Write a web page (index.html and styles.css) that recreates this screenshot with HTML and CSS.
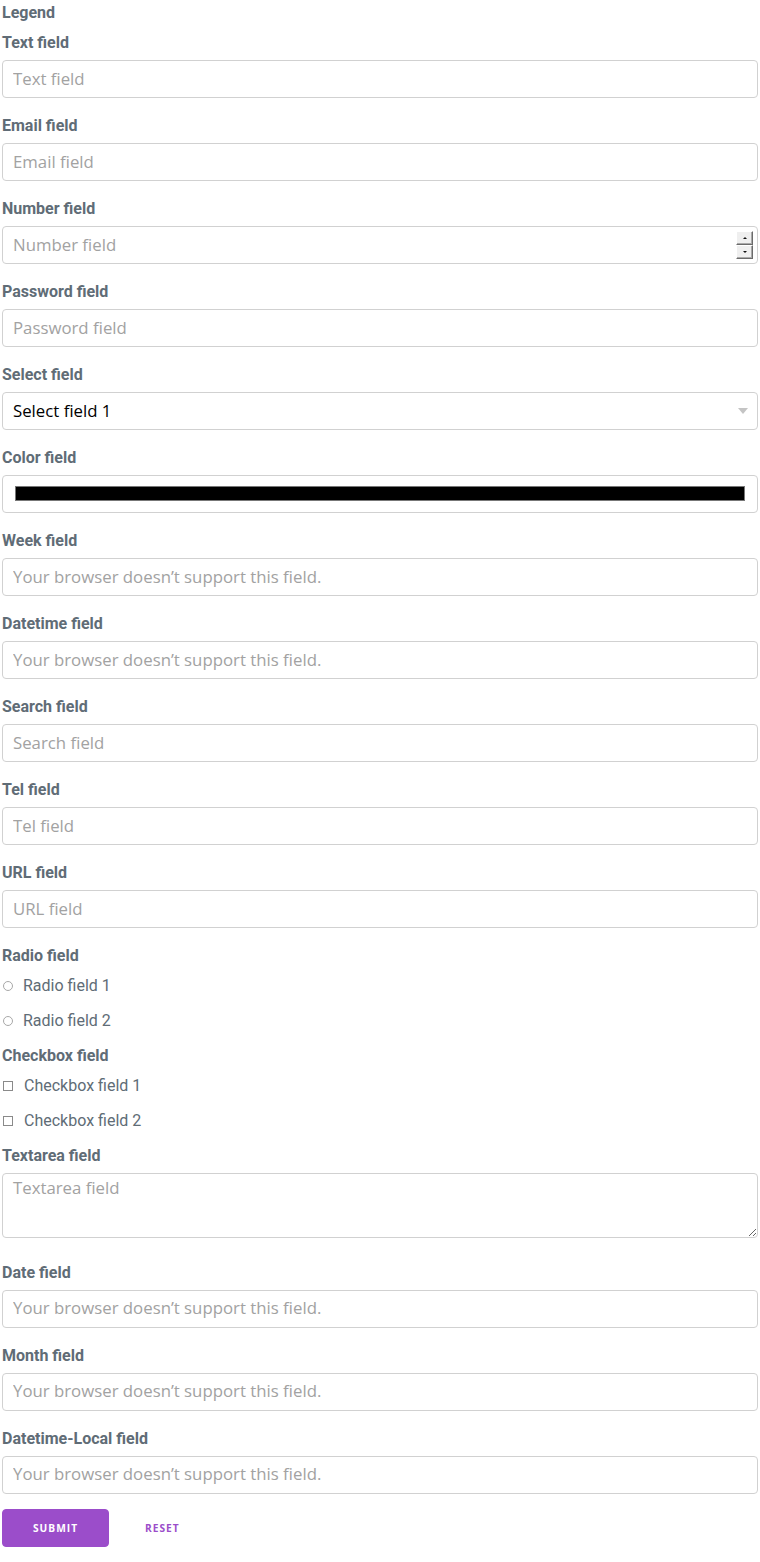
FILE: index.html
```html
<!DOCTYPE html>
<html lang="en">
<head>
<meta charset="utf-8">
<title>Form</title>
<link rel="stylesheet" href="styles.css">
</head>
<body>
<form class="form">
  <fieldset class="fieldset">
    <legend class="legend">Legend</legend>

    <label class="label" for="f-text">Text field</label>
    <input class="field" id="f-text" type="text" placeholder="Text field">

    <label class="label" for="f-email">Email field</label>
    <input class="field" id="f-email" type="email" placeholder="Email field">

    <label class="label" for="f-number">Number field</label>
    <div class="number-wrap">
      <input class="field field-number" id="f-number" type="number" placeholder="Number field">
      <span class="spinner" aria-hidden="true">
        <span class="spin spin-up"><span class="tri tri-up"></span></span>
        <span class="spin spin-down"><span class="tri tri-down"></span></span>
      </span>
    </div>

    <label class="label" for="f-password">Password field</label>
    <input class="field" id="f-password" type="password" placeholder="Password field">

    <label class="label" for="f-select">Select field</label>
    <div class="select-wrap">
      <select class="field field-select" id="f-select">
        <option>Select field 1</option>
        <option>Select field 2</option>
      </select>
    </div>

    <label class="label" for="f-color">Color field</label>
    <input class="field field-color" id="f-color" type="color" value="#000000">

    <label class="label" for="f-week">Week field</label>
    <input class="field" id="f-week" type="text" placeholder="Your browser doesn’t support this field.">

    <label class="label" for="f-datetime">Datetime field</label>
    <input class="field" id="f-datetime" type="text" placeholder="Your browser doesn’t support this field.">

    <label class="label" for="f-search">Search field</label>
    <input class="field" id="f-search" type="text" placeholder="Search field">

    <label class="label" for="f-tel">Tel field</label>
    <input class="field" id="f-tel" type="tel" placeholder="Tel field">

    <label class="label" for="f-url">URL field</label>
    <input class="field" id="f-url" type="url" placeholder="URL field">

    <span class="label">Radio field</span>
    <div class="choice">
      <input class="radio" id="r1" type="radio" name="radio">
      <label class="choice-label" for="r1">Radio field 1</label>
    </div>
    <div class="choice">
      <input class="radio" id="r2" type="radio" name="radio">
      <label class="choice-label" for="r2">Radio field 2</label>
    </div>

    <span class="label">Checkbox field</span>
    <div class="choice">
      <input class="checkbox" id="c1" type="checkbox">
      <label class="choice-label" for="c1">Checkbox field 1</label>
    </div>
    <div class="choice">
      <input class="checkbox" id="c2" type="checkbox">
      <label class="choice-label" for="c2">Checkbox field 2</label>
    </div>

    <label class="label" for="f-textarea">Textarea field</label>
    <textarea class="field field-textarea" id="f-textarea" placeholder="Textarea field"></textarea>

    <label class="label" for="f-date">Date field</label>
    <input class="field" id="f-date" type="text" placeholder="Your browser doesn’t support this field.">

    <label class="label" for="f-month">Month field</label>
    <input class="field" id="f-month" type="text" placeholder="Your browser doesn’t support this field.">

    <label class="label" for="f-dtl">Datetime-Local field</label>
    <input class="field" id="f-dtl" type="text" placeholder="Your browser doesn’t support this field.">
  </fieldset>

  <div class="actions">
    <button class="btn btn-primary" type="submit">Submit</button>
    <button class="btn btn-clear" type="reset">Reset</button>
  </div>
</form>
</body>
</html>
```
FILE: styles.css
```css
* { box-sizing: border-box; }

html, body {
  margin: 0;
  padding: 0;
  background: #fff;
}

body {
  font-family: Roboto, "Liberation Sans", sans-serif;
  font-size: 16px;
  line-height: 25px;
  color: #606c76;
}

.form {
  padding: 0 2px;
  width: 760px;
}

.fieldset {
  border: 0;
  margin: 0;
  padding: 0;
  min-width: 0;
}

.legend {
  display: block;
  padding: 0;
  margin: 0 0 5px;
  font-weight: 700;
  font-size: 16px;
  line-height: 25px;
}

.label {
  display: block;
  font-weight: 700;
  font-size: 16px;
  line-height: 25px;
  margin-bottom: 5px;
}

.field {
  display: block;
  width: 100%;
  height: 38px;
  margin: 0 0 15px;
  padding: 5px 10px 7px;
  border: 1px solid #d1d1d1;
  border-radius: 4px;
  background: #fff;
  font-family: "Open Sans", "Noto Sans", sans-serif;
  font-size: 16.8px;
  color: #111;
  outline: none;
  -webkit-appearance: none;
  appearance: none;
}

.field::placeholder {
  color: #a2a2a2;
  opacity: 1;
}

/* number */
.number-wrap {
  position: relative;
}

.field-number {
  -moz-appearance: textfield;
}

.field-number::-webkit-inner-spin-button,
.field-number::-webkit-outer-spin-button {
  -webkit-appearance: none;
  margin: 0;
}

.spinner {
  position: absolute;
  top: 5px;
  right: 5px;
  width: 17px;
  height: 28px;
  display: flex;
  flex-direction: column;
}

.spin {
  flex: 1;
  display: flex;
  align-items: center;
  justify-content: center;
  background: #efefef;
  border-top: 1px solid #fff;
  border-left: 1px solid #fff;
  border-right: 1px solid #6b6b6b;
  border-bottom: 1px solid #6b6b6b;
  box-shadow: inset -1px -1px 0 #a9a9a9;
}

.tri {
  width: 0;
  height: 0;
  border-left: 2px solid transparent;
  border-right: 2px solid transparent;
}

.tri-up { border-bottom: 2px solid #111; }
.tri-down { border-top: 2px solid #111; }

/* select */
.select-wrap {
  position: relative;
}

.select-wrap::after {
  content: "";
  position: absolute;
  top: 16px;
  right: 10px;
  width: 0;
  height: 0;
  border-left: 5px solid transparent;
  border-right: 5px solid transparent;
  border-top: 6px solid #c4c4c4;
  pointer-events: none;
}

.field-select {
  color: #000;
  padding-right: 30px;
}

/* color */
.field-color {
  padding: 10px 12px 11px;
  cursor: pointer;
}

.field-color::-webkit-color-swatch-wrapper {
  padding: 0;
}

.field-color::-webkit-color-swatch {
  border: 1px solid #777;
  border-radius: 0;
}

/* radio / checkbox */
.choice {
  display: flex;
  align-items: center;
  height: 25px;
  margin-bottom: 10px;
}

.radio,
.checkbox {
  -webkit-appearance: none;
  appearance: none;
  width: 10px;
  height: 10px;
  margin: 1px 0 0 1px;
  padding: 0;
  background: #fff;
  flex: none;
}

.radio {
  border: 1px solid #a8a8a8;
  border-radius: 50%;
  margin-right: 10px;
}

.checkbox {
  border: 1px solid #8a8a8a;
  margin-right: 11px;
}

.choice-label {
  font-weight: 400;
  font-size: 16px;
  color: #606c76;
}

/* textarea */
.field-textarea {
  height: 65px;
  min-height: 65px;
  margin-bottom: 21.5px;
  resize: both;
  line-height: 22px;
  padding: 3px 10px;
}

/* buttons */
.actions {
  display: flex;
  gap: 5px;
  align-items: center;
}

.btn {
  height: 38px;
  padding: 0 30px;
  border-radius: 4px;
  font-family: "Open Sans", "Noto Sans", sans-serif;
  font-size: 10.2px;
  font-weight: 700;
  letter-spacing: 1px;
  text-transform: uppercase;
  cursor: pointer;
  border: 1px solid #9b4dca;
}

.btn-primary {
  background: #9b4dca;
  color: #fff;
}

.btn-clear {
  background: transparent;
  border-color: transparent;
  color: #9b4dca;
}
```
